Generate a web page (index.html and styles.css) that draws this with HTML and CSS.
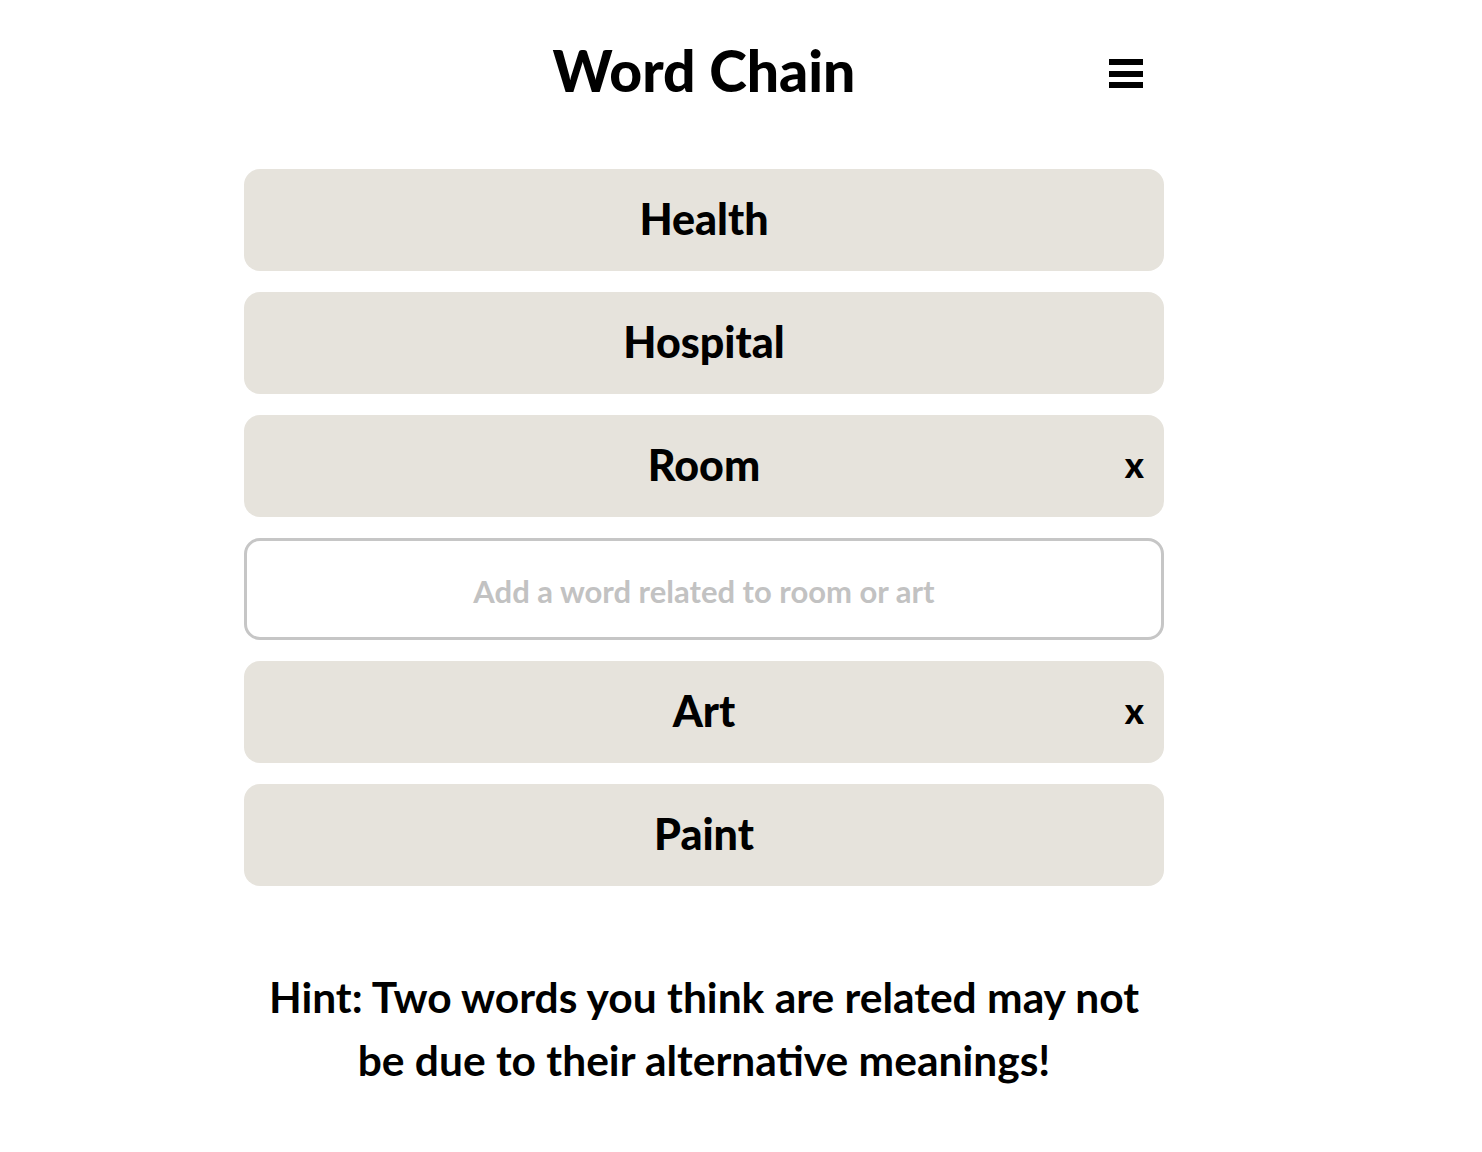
FILE: index.html
```html
<!DOCTYPE html>
<html lang="en">
<head>
  <meta charset="UTF-8"/>
  <meta name="viewport" content="width=device-width, initial-scale=1.0"/>
  <title>Word Chain</title>
  <link rel="stylesheet" href="styles.css">
</head>
<body>

  <div class="game">
    <header>
      <h1>Word Chain</h1>
      <button class="menu-btn" aria-label="Menu">
        <span></span><span></span><span></span>
      </button>
    </header>

    <!-- Chain -->
    <div class="chain">
      <div class="word">Health</div>
      <div class="word">Hospital</div>
      <div class="word">Room<span class="remove">x</span></div>
      <input type="text" class="word-input" placeholder="Add a word related to room or art"/>
      <div class="word">Art<span class="remove">x</span></div>
      <div class="word">Paint</div>
    </div>

    <p class="hint">Hint: Two words you think are related may not be due to their alternative meanings!</p>
  </div>

</body>
</html>
```

FILE: styles.css
```css
body {
  font-family: 'Lato', 'Open Sans', sans-serif;
  margin: 0;
  padding: 0;
  background: white;
  color: black;
}

.game {
  width: 920px;
  margin-left: 244px;
}

header {
  position: relative;
  height: 145px;
  display: flex;
  align-items: center;
  justify-content: center;
}

header h1 {
  margin: 0;
  font-size: 57px;
  font-weight: 900;
  margin-top: -6px;
}

.menu-btn {
  position: absolute;
  right: 21px;
  top: 59px;
  width: 34px;
  height: 29px;
  padding: 0;
  border: none;
  background: none;
  display: flex;
  flex-direction: column;
  justify-content: space-between;
  cursor: pointer;
}

.menu-btn span {
  display: block;
  height: 6px;
  background: black;
}

.chain {
  display: flex;
  flex-direction: column;
  gap: 21px;
  margin-top: 24px;
}

.word {
  position: relative;
  height: 102px;
  padding-bottom: 4px;
  box-sizing: border-box;
  background: #e6e3dc;
  border-radius: 16px;
  display: flex;
  align-items: center;
  justify-content: center;
  font-size: 43px;
  font-weight: 900;
}

.remove {
  position: absolute;
  right: 20px;
  top: 50%;
  transform: translateY(-55%);
  font-size: 36px;
  font-weight: 900;
  cursor: pointer;
}

.word-input {
  height: 102px;
  box-sizing: border-box;
  border: 3px solid #c6c6c6;
  border-radius: 16px;
  padding-top: 4px;
  font-family: inherit;
  font-size: 31px;
  font-weight: 700;
  text-align: center;
  outline: none;
}

.word-input::placeholder {
  color: #c2c2c2;
}

.hint {
  margin: 79px auto 0;
  width: 900px;
  text-align: center;
  font-size: 42.5px;
  font-weight: 700;
  line-height: 63px;
}
```
